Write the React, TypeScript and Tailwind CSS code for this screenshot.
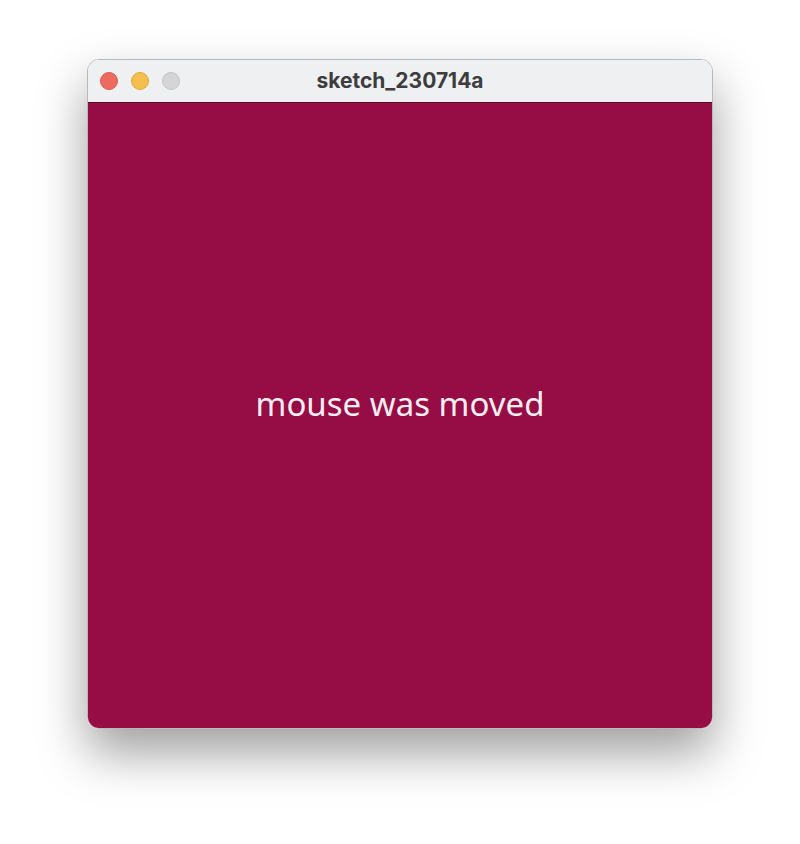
export default function App() {
  return (
    <div className="flex h-[844px] w-[800px] justify-center bg-white pt-[59px]">
      <div className="flex h-[670px] w-[626px] flex-col overflow-hidden rounded-[12px] border border-[#b9b9bb] shadow-[0_24px_50px_rgba(0,0,0,0.38)]">
        {/* title bar */}
        <div className="relative flex h-[43px] shrink-0 items-center border-b border-[#5a0a2a] bg-[#eff0f2] pl-[12px]">
          <div className="flex gap-[13px]">
            <span className="block h-[18px] w-[18px] rounded-full border border-[#dd5a4e] bg-[#ed6a5e]" />
            <span className="block h-[18px] w-[18px] rounded-full border border-[#e0a93c] bg-[#f5bf4f]" />
            <span className="block h-[18px] w-[18px] rounded-full border border-[#c4c4c6] bg-[#d5d5d7]" />
          </div>
          <p className="absolute inset-x-0 text-center font-['Inter',sans-serif] text-[21px] font-bold text-[#3d3d3f]">
            sketch_230714a
          </p>
        </div>
        {/* canvas */}
        <div className="flex flex-1 items-center justify-center bg-[#960c44] pb-[24px]">
          <p className="font-['Noto_Sans',sans-serif] text-[33px] text-[#fbeef3]">
            mouse was moved
          </p>
        </div>
      </div>
    </div>
  );
}
